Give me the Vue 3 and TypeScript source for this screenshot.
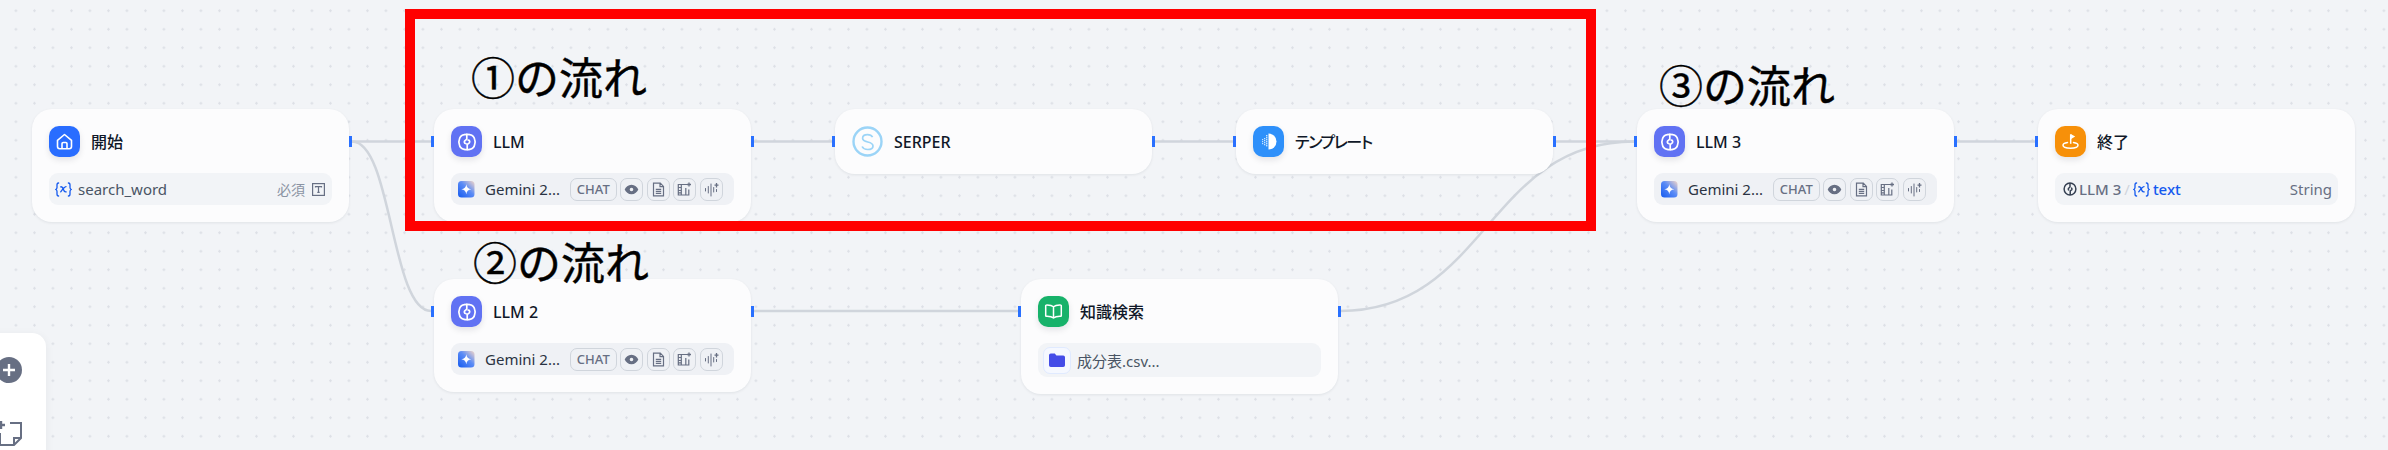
<script setup lang="ts">
interface FlowNode {
  id: string
  title: string
  kind: 'start' | 'llm' | 'tool' | 'template' | 'knowledge' | 'end'
  x: number
  y: number
  h: number
}

const nodes: FlowNode[] = [
  { id: 'start', title: '開始', kind: 'start', x: 32, y: 109, h: 113 },
  { id: 'llm', title: 'LLM', kind: 'llm', x: 434, y: 109, h: 113 },
  { id: 'serper', title: 'SERPER', kind: 'tool', x: 835, y: 109, h: 65 },
  { id: 'tpl', title: 'テンプレート', kind: 'template', x: 1236, y: 109, h: 65 },
  { id: 'llm3', title: 'LLM 3', kind: 'llm', x: 1637, y: 109, h: 113 },
  { id: 'end', title: '終了', kind: 'end', x: 2038, y: 109, h: 113 },
  { id: 'llm2', title: 'LLM 2', kind: 'llm', x: 434, y: 279, h: 113 },
  { id: 'kn', title: '知識検索', kind: 'knowledge', x: 1021, y: 279, h: 115 },
]

const edges: string[] = [
  'M352 141.5 H431',
  'M352 141.5 C392 141.5 391 311 431 311',
  'M753 141.5 H832',
  'M1154 141.5 H1233',
  'M1555 141.5 H1634',
  'M753 311 H1018',
  'M1340 311 C1487 311 1487 141.5 1634 141.5',
  'M1956 141.5 H2035',
]

const notes = [
  { text: '①の流れ', x: 471, y: 46 },
  { text: '②の流れ', x: 473, y: 231 },
  { text: '③の流れ', x: 1659, y: 54 },
]

const hasLeftHandle = (n: FlowNode) => n.kind !== 'start'
const hasRightHandle = (n: FlowNode) => n.kind !== 'end'
</script>

<template>
  <div class="canvas">
    <svg class="edges" width="2388" height="450" viewBox="0 0 2388 450" fill="none">
      <path v-for="d in edges" :key="d" :d="d" stroke="#d0d5dc" stroke-width="2.5" />
    </svg>

    <div
      v-for="n in nodes"
      :key="n.id"
      class="node"
      :style="{ left: n.x + 'px', top: n.y + 'px', height: n.h + 'px' }"
    >
      <span v-if="hasLeftHandle(n)" class="handle handle-l"></span>
      <span v-if="hasRightHandle(n)" class="handle handle-r"></span>

      <div class="head">
        <span v-if="n.kind === 'tool'" class="serper">
          <svg width="31" height="31" viewBox="0 0 31 31" fill="none">
            <circle cx="15.5" cy="15.5" r="14" stroke="#9bd4f7" stroke-width="2.4" />
            <path d="M20.6 11.2c-.9-1.6-2.8-2.5-5.1-2.5-2.9 0-4.9 1.5-4.9 3.6 0 5 10.4 2.4 10.4 7.6 0 2.2-2.2 3.6-5.3 3.6-2.6 0-4.7-1.1-5.6-3" stroke="#9bd4f7" stroke-width="1.7" />
          </svg>
        </span>
        <span v-else class="ico" :class="'ico-' + n.kind">
          <svg v-if="n.kind === 'start'" width="19" height="19" viewBox="0 0 19 19" fill="none" stroke="#fff" stroke-width="1.6" stroke-linejoin="round">
            <path d="M2.5 8.3 9.5 2.5l7 5.8v6.2a2.2 2.2 0 0 1-2.2 2.2H4.7a2.2 2.2 0 0 1-2.2-2.2z" />
            <path d="M7 16.700v-5a1.2 1.2 0 0 1 1.2-1.2h2.6a1.2 1.2 0 0 1 1.2 1.2v5" />
          </svg>
          <svg v-else-if="n.kind === 'llm'" width="20" height="20" viewBox="0 0 19 19" fill="none" stroke="#fff" stroke-width="1.6" stroke-linecap="round" stroke-linejoin="round">
            <path d="M6.800 2.500C4.400 3 2.500 5 2.200 7.300c-.4 1-.4 3.400 0 4.400.3 2.300 2.200 4.300 4.600 4.800 1 .4 4.400.4 5.400 0 2.400-.5 4.300-2.500 4.600-4.800.4-1 .4-3.400 0-4.400C16.500 5 14.600 3 12.200 2.500c-1-.4-4.400-.4-5.400 0z" />
            <path d="M9.300 2.300v4.200c0 1.100-2.400 1-2.400 3 0 1.200 1 1.500 1.600 1.500M9.700 16.700v-4.500c0-1.100 2.400-1 2.400-3 0-1.100-.9-1.500-1.500-1.500" />
          </svg>
          <svg v-else-if="n.kind === 'template'" width="21" height="21" viewBox="0 0 21 21">
            <path d="M10.500 2.500a8 8 0 0 1 0 16z" fill="#fff" />
            <g fill="#fff" opacity=".75">
              <rect x="8" y="4" width="1.4" height="1.4" /><rect x="8" y="6" width="1.4" height="1.4" /><rect x="8" y="8" width="1.4" height="1.4" /><rect x="8" y="10" width="1.4" height="1.4" /><rect x="8" y="12" width="1.4" height="1.4" /><rect x="8" y="14" width="1.4" height="1.4" />
              <rect x="6" y="7" width="1.3" height="1.3" /><rect x="6" y="9" width="1.3" height="1.3" /><rect x="6" y="11" width="1.3" height="1.3" /><rect x="6" y="13" width="1.3" height="1.3" />
              <rect x="4" y="8" width="1.2" height="1.2" /><rect x="4" y="10" width="1.2" height="1.2" /><rect x="4" y="12" width="1.2" height="1.2" />
            </g>
          </svg>
          <svg v-else-if="n.kind === 'knowledge'" width="19" height="19" viewBox="0 0 19 19" fill="none" stroke="#fff" stroke-width="1.5" stroke-linejoin="round">
            <path d="M9.500 4.800C8 3.500 5.500 3 2.300 3.100a.6.6 0 0 0-.6.6v10a.6.6 0 0 0 .6.6c3.200-.1 5.700.4 7.200 1.700 1.500-1.300 4-1.800 7.200-1.700a.6.6 0 0 0 .6-.6v-10a.6.6 0 0 0-.6-.6C14.500 3 11 3.500 9.500 4.800zM9.500 4.800v10.600" />
          </svg>
          <svg v-else width="19" height="19" viewBox="0 0 19 19" fill="none">
            <path d="M9.700 11.800V2.300" stroke="#fff" stroke-width="1.5" />
            <path d="M9.700 2 14.200 4.600 9.700 7.200z" fill="#fff" />
            <path d="M6.500 10.600C3.800 11.100 2 12 2 13.300c0 1.700 3.400 2.900 7.500 2.900s7.500-1.200 7.500-2.900c0-1.300-1.800-2.200-4.500-2.700" stroke="#fff" stroke-width="1.5" stroke-linecap="round" />
          </svg>
        </span>
        <span class="title" :class="{ 'title-kana': n.kind === 'template' }">{{ n.title }}</span>
      </div>

      <div v-if="n.kind === 'start'" class="row">
        <svg class="var-ico" width="17" height="15" viewBox="0 0 17 15" fill="none" stroke="#155aef" stroke-width="1.3" stroke-linecap="round">
          <path d="M3.600 1C2.200 1 2 1.800 2 3v2.600c0 .9-.3 1.500-1.200 1.900.9.400 1.200 1 1.200 1.900V12c0 1.200.2 2 1.600 2M13.400 1c1.400 0 1.600.8 1.600 2v2.600c0 .9.300 1.500 1.200 1.900-.9.400-1.200 1-1.200 1.900V12c0 1.200-.2 2-1.600 2" />
          <path d="M5.700 4.800c1.700-.4 2 .5 2.600 2.500s1 3 2.900 2.500M11 4.700c-1.700.2-3.400 2.600-5.300 5.100" />
        </svg>
        <span class="var-name">search_word</span>
        <span class="spacer"></span>
        <span class="required">必須</span>
        <svg class="t-ico" width="13" height="13" viewBox="0 0 13 13" fill="none" stroke="#676f83" stroke-width="1.2">
          <rect x=".6" y=".6" width="11.8" height="11.8" />
          <path d="M3.500 4.500v-.8h6v.8M6.500 3.700v5.600M5.300 9.300h2.400" />
        </svg>
      </div>

      <div v-else-if="n.kind === 'llm'" class="row row-llm">
        <svg class="gem" width="17" height="17" viewBox="0 0 17 17">
          <defs>
            <linearGradient :id="'g-' + n.id" x1="0" y1="1" x2="1" y2="0">
              <stop offset="0" stop-color="#155aef" />
              <stop offset=".55" stop-color="#5b8cf6" />
              <stop offset="1" stop-color="#f5d7c8" />
            </linearGradient>
          </defs>
          <rect width="16.5" height="16.5" rx="3.5" :fill="`url(#g-${n.id})`" />
          <path d="M8.300 3.300c.4 3 1.900 4.600 5 5-3.100.4-4.600 2-5 5-.4-3-1.900-4.600-5-5 3.100-.4 4.600-2 5-5z" fill="#fff" />
        </svg>
        <span class="model">Gemini 2...</span>
        <span class="badge badge-text">CHAT</span>
        <span class="badge">
          <svg width="15" height="15" viewBox="0 0 15 15">
            <path fill-rule="evenodd" d="M7.500 2.700c3.300 0 5.800 2.200 6.800 4.800-1 2.600-3.500 4.800-6.800 4.800S1.700 10.100.7 7.500c1-2.600 3.500-4.800 6.800-4.800zm0 3a1.800 1.800 0 1 0 0 3.600 1.800 1.800 0 0 0 0-3.600z" fill="#676f83" />
          </svg>
        </span>
        <span class="badge">
          <svg width="15" height="15" viewBox="0 0 15 15" fill="none" stroke="#676f83" stroke-width="1.2">
            <path d="M2.500 1.200h6.800l3.200 3.200v9.400h-10zM9 1.200v3.500h3.500M4.800 7.300h5.400M4.800 9.300h5.400M4.800 11.300h5.400" />
          </svg>
        </span>
        <span class="badge">
          <svg width="15" height="15" viewBox="0 0 15 15" fill="none" stroke="#676f83" stroke-width="1.2">
            <path d="M10 2.500H1.300v10.500h10.500V7.500M4.300 2.500V13M8.800 6v7M1.300 5.500h3M1.300 8.500h3M1.300 10.800h3" />
            <path d="M12 .5v4M10 2.500h4" stroke-width="1.3" />
          </svg>
        </span>
        <span class="badge">
          <svg width="15" height="15" viewBox="0 0 15 15" fill="none" stroke="#676f83" stroke-width="1">
            <path d="M1.500 6.500v2.500M4.300 4.500v6.500M7 2v12M9.700 5.500v4.500" stroke-linecap="round" />
            <path d="M12.500 1v4.500M10.500 3.200h4" stroke-width="1.3" />
            <path d="M12.500 7.500v2" stroke-linecap="round" />
          </svg>
        </span>
      </div>

      <div v-else-if="n.kind === 'knowledge'" class="row row-kn">
        <span class="folder">
          <svg width="16" height="14" viewBox="0 0 16 14">
            <path d="M1.800.5h4l1.600 2h6.800A1.800 1.800 0 0 1 16 4.300v7.900a1.800 1.800 0 0 1-1.800 1.800H1.800A1.800 1.800 0 0 1 0 12.200V2.300A1.800 1.800 0 0 1 1.800.5z" fill="#444ce7" />
          </svg>
        </span>
        <span class="var-name">成分表.csv...</span>
      </div>

      <div v-else-if="n.kind === 'end'" class="row row-end">
        <svg width="14" height="14" viewBox="0 0 19 19" fill="none" stroke="#354052" stroke-width="2">
          <circle cx="9.500" cy="9.500" r="8" />
          <path d="M9.500 1.500v5c0 1.100-2.400 1-2.400 3 0 1 .7 1.500 1.400 1.500M9.800 17.500v-5c0-1.100 2.400-1 2.400-3 0-1-.7-1.500-1.400-1.500" />
        </svg>
        <span class="var-name end-src">LLM 3</span>
        <span class="slash">/</span>
        <svg class="var-ico" width="17" height="15" viewBox="0 0 17 15" fill="none" stroke="#155aef" stroke-width="1.3" stroke-linecap="round">
          <path d="M3.600 1C2.200 1 2 1.800 2 3v2.600c0 .9-.3 1.500-1.200 1.900.9.400 1.200 1 1.200 1.900V12c0 1.200.2 2 1.600 2M13.400 1c1.400 0 1.600.8 1.600 2v2.600c0 .9.300 1.500 1.200 1.900-.9.400-1.200 1-1.200 1.900V12c0 1.200-.2 2-1.600 2" />
          <path d="M5.700 4.800c1.700-.4 2 .5 2.600 2.500s1 3 2.900 2.500M11 4.700c-1.700.2-3.400 2.600-5.300 5.100" />
        </svg>
        <span class="end-var">text</span>
        <span class="spacer"></span>
        <span class="var-type">String</span>
      </div>
    </div>

    <div class="red-box"></div>

    <div
      v-for="note in notes"
      :key="note.text"
      class="note"
      :style="{ left: note.x + 'px', top: note.y + 'px' }"
    >{{ note.text }}</div>

    <aside class="panel">
      <svg class="plus" width="26" height="26" viewBox="0 0 26 26">
        <circle cx="13" cy="13" r="13" fill="#676f83" />
        <path d="M13 7v12M7 13h12" stroke="#fff" stroke-width="2.4" />
      </svg>
      <svg class="sticky" width="26" height="26" viewBox="0 0 26 26" fill="none" stroke="#676f83" stroke-width="2">
        <path d="M14 2h11v15l-7 7H4V12" />
        <path d="M18 24v-7h7" />
        <path d="M5 0v8M1 4h8" stroke-width="2.4" />
      </svg>
    </aside>
  </div>
</template>

<style scoped>
.canvas {
  position: relative;
  width: 2388px;
  height: 450px;
  overflow: hidden;
  background-color: #f2f4f7;
  background-image: radial-gradient(circle, #dde0e6 1.2px, transparent 1.4px);
  background-size: 18.5px 18.5px;
  background-position: 6.7px 1.5px;
  font-family: "Noto Sans", "Noto Sans CJK JP", sans-serif;
}
.edges {
  position: absolute;
  left: 0;
  top: 0;
}
.node {
  position: absolute;
  width: 317px;
  box-sizing: border-box;
  padding: 17px 17px 0;
  background: #fcfcfd;
  border-radius: 20px;
  box-shadow: 0 1px 3px rgba(16, 24, 40, 0.08);
}
.handle {
  position: absolute;
  top: 27px;
  width: 3px;
  height: 11px;
  background: #2970ff;
}
.handle-l {
  left: -3px;
}
.handle-r {
  right: -3px;
}
.head {
  display: flex;
  align-items: center;
  gap: 11px;
  height: 31px;
}
.ico,
.serper {
  display: flex;
  align-items: center;
  justify-content: center;
  width: 31px;
  height: 31px;
  flex: none;
}
.ico {
  border-radius: 10px;
  box-shadow: 0 3px 6px rgba(16, 24, 40, 0.1);
}
.ico-start {
  background: #296dff;
}
.ico-llm {
  background: #6172f3;
}
.ico-template {
  background: #2e90fa;
}
.ico-knowledge {
  background: #17b26a;
}
.ico-end {
  background: #f79009;
}
.title {
  font-size: 16px;
  font-weight: 500;
  line-height: 22px;
  color: #101828;
  white-space: nowrap;
  font-feature-settings: "palt";
}
.title-kana {
  letter-spacing: -1.4px;
}
.row {
  display: flex;
  align-items: center;
  height: 32px;
  margin-top: 16px;
  padding: 0 6px;
  border-radius: 9px;
  background: #f2f4f7;
  font-size: 15px;
  white-space: nowrap;
}
.var-ico {
  flex: none;
}
.var-name {
  color: #495464;
  margin-left: 6px;
}
.spacer {
  flex: 1;
}
.required {
  color: #8a93a3;
  font-size: 14px;
  margin-right: 7px;
}
.t-ico {
  margin-right: 1px;
}
.row-llm {
  padding: 0 0 0 7px;
  background: #eff1f5;
}
.gem {
  flex: none;
  margin-right: 10px;
}
.model {
  color: #2a3342;
  width: 85px;
  flex: none;
}
.badge {
  display: flex;
  align-items: center;
  justify-content: center;
  box-sizing: border-box;
  width: 23px;
  height: 23px;
  margin-right: 3.5px;
  border: 1px solid #d0d5dc;
  border-radius: 7px;
  flex: none;
}
.badge-text {
  width: 46.5px;
  color: #676f83;
  font-size: 13px;
  font-weight: 500;
}
.row-kn {
  height: 34px;
  padding: 0 5px;
}
.folder {
  display: flex;
  align-items: center;
  justify-content: center;
  box-sizing: border-box;
  width: 28px;
  height: 27px;
  border: 1px solid #e0eaff;
  border-radius: 7px;
  background: #f5f8ff;
}
.row-end {
  padding: 0 6px 0 8px;
}
.end-src {
  color: #676f83;
  margin-left: 2px;
  font-weight: 500;
}
.slash {
  color: #d0d5dc;
  margin: 0 3px;
}
.end-var {
  color: #155aef;
  margin-left: 3px;
  font-weight: 500;
}
.var-type {
  color: #676f83;
}
.red-box {
  position: absolute;
  left: 405px;
  top: 9px;
  width: 1191px;
  height: 222px;
  box-sizing: border-box;
  border: 10px solid #ff0000;
}
.note {
  position: absolute;
  font-family: "Noto Sans CJK JP", sans-serif;
  font-size: 44px;
  font-weight: 400;
  -webkit-text-stroke: 0.4px #000;
  line-height: 60px;
  color: #000;
  white-space: nowrap;
}
.panel {
  position: absolute;
  left: -20px;
  top: 333px;
  width: 66px;
  height: 140px;
  background: #fff;
  border-radius: 14px;
  box-shadow: 0 2px 10px rgba(16, 24, 40, 0.06);
}
.plus {
  position: absolute;
  left: 16px;
  top: 24px;
}
.sticky {
  position: absolute;
  left: 16px;
  top: 88px;
}
</style>
